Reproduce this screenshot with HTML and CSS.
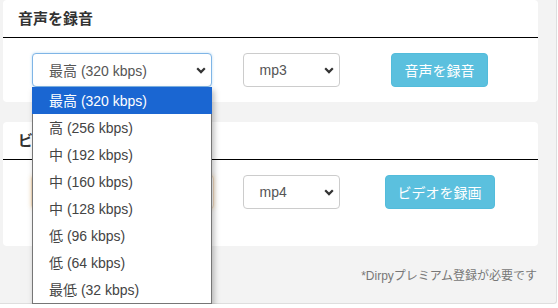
FILE: index.html
```html
<!DOCTYPE html>
<html lang="ja">
<head>
    <meta charset="UTF-8">
    <meta name="viewport" content="width=device-width, initial-scale=1.0">
    <title>Dirpy 録音</title>
    <link rel="stylesheet" href="styles.css">
</head>
<body>
    <div class="wrap">
        <!-- audio -->
        <div class="panel">
            <div class="panel-heading">音声を録音</div>
            <div class="panel-body">
                <div class="cell">
                    <div class="select-box">
                        <div class="select focus">
                            <span>最高 (320 kbps)</span>
                            <svg class="chev" width="10" height="7" viewBox="0 0 10 7"><path d="M1.2 1.3 5 5.1 8.8 1.3" fill="none" stroke="#333" stroke-width="2.2"/></svg>
                        </div>
                        <ul class="dropdown">
                            <li class="active">最高 (320 kbps)</li>
                            <li>高 (256 kbps)</li>
                            <li>中 (192 kbps)</li>
                            <li>中 (160 kbps)</li>
                            <li>中 (128 kbps)</li>
                            <li>低 (96 kbps)</li>
                            <li>低 (64 kbps)</li>
                            <li>最低 (32 kbps)</li>
                        </ul>
                    </div>
                </div>
                <div class="cell">
                    <div class="select small">
                        <span>mp3</span>
                        <svg class="chev" width="10" height="7" viewBox="0 0 10 7"><path d="M1.2 1.3 5 5.1 8.8 1.3" fill="none" stroke="#333" stroke-width="2.2"/></svg>
                    </div>
                </div>
                <div class="cell">
                    <button class="btn">音声を録音</button>
                </div>
            </div>
        </div>

        <!-- video -->
        <div class="panel">
            <div class="panel-heading">ビデオを録画</div>
            <div class="panel-body tall">
                <div class="cell">
                    <div class="select wide warn"></div>
                </div>
                <div class="cell">
                    <div class="select small">
                        <span>mp4</span>
                        <svg class="chev" width="10" height="7" viewBox="0 0 10 7"><path d="M1.2 1.3 5 5.1 8.8 1.3" fill="none" stroke="#333" stroke-width="2.2"/></svg>
                    </div>
                </div>
                <div class="cell">
                    <button class="btn video">ビデオを録画</button>
                </div>
            </div>
        </div>

        <p class="note">*Dirpyプレミアム登録が必要です</p>
    </div>
</body>
</html>
```

FILE: styles.css
```css
body {
    margin: 0;
    background: #fff;
    font-family: "Liberation Sans", Arial, "Noto Sans CJK JP", sans-serif;
    font-size: 14px;
    color: #333;
}

.wrap {
    width: 535px;
    height: 303px;
    padding: 0 18px 0 3px;
    background: #f3f3f3;
    border-right: 1px solid #dedede;
    border-bottom: 1px solid #dedede;
    border-bottom-right-radius: 3px;
}

.panel {
    background: #fff;
    border-radius: 4px;
    margin-bottom: 20px;
}

.panel-heading {
    height: 37px;
    line-height: 37px;
    padding-left: 15px;
    font-size: 15px;
    font-weight: bold;
    border-bottom: 1px solid #000;
}

.panel-body {
    display: grid;
    grid-template-columns: 238px 100px 197px;
    padding: 15px 0;
}

.panel-body.tall {
    padding-bottom: 37px;
}

.cell {
    display: flex;
    justify-content: center;
}

.select-box {
    position: relative;
}

.select {
    box-sizing: border-box;
    display: flex;
    align-items: center;
    justify-content: space-between;
    width: 180px;
    height: 34px;
    padding: 0 5px 0 16px;
    border: 1px solid #ccc;
    border-radius: 4px;
    color: #555;
    background: #fff;
}

.select.focus {
    border-color: #7fb5e6;
    box-shadow: 0 0 3px rgba(102, 175, 233, .45);
}

.select.small {
    width: 97px;
}

.select.wide {
    width: 183px;
}

.select.warn {
    border-color: #f3dcc0;
    box-shadow: 0 0 4px rgba(240, 173, 78, .35);
}

.chev {
    margin-top: 1px;
}

.dropdown {
    position: absolute;
    top: 34px;
    left: 0;
    z-index: 5;
    width: 178px;
    margin: 0;
    padding: 0;
    list-style: none;
    background: #fff;
    border: 1px solid #767676;
    border-top: none;
    box-shadow: 2px 3px 6px rgba(0, 0, 0, .28);
}

.dropdown li {
    height: 27px;
    line-height: 29px;
    padding-left: 16px;
    color: #444;
}

.dropdown li.active {
    margin: 0 -1px;
    padding-left: 17px;
    background: #1a66d2;
    color: #fff;
}

.btn {
    width: 97px;
    height: 34px;
    padding: 0;
    font-family: inherit;
    font-size: 14px;
    color: #fff;
    background: #5bc0de;
    border: 1px solid #53bcdb;
    border-radius: 4px;
}

.btn.video {
    width: 110px;
}

.note {
    margin: 0;
    padding-right: 1px;
    text-align: right;
    font-size: 12px;
    color: #777;
}
```
